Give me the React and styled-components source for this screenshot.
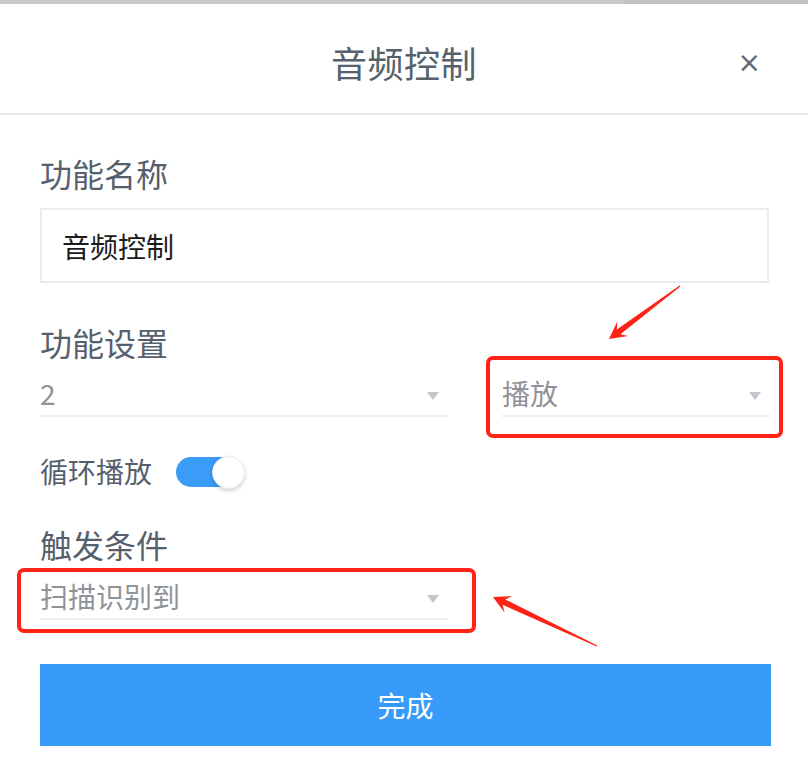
import React, { useState } from "react";
import styled, { createGlobalStyle } from "styled-components";

const GlobalStyle = createGlobalStyle`
  body {
    margin: 0;
    background: #fff;
    font-family: "Noto Sans CJK SC", "Noto Sans", sans-serif;
  }
`;

// 标注用的箭头，按尾部和尖端坐标算出多边形
const arrowPoints = (tail, tip, headLen = 17, headW = 9, shaftW = 3) => {
  const dx = tip[0] - tail[0];
  const dy = tip[1] - tail[1];
  const len = Math.hypot(dx, dy);
  const ux = dx / len;
  const uy = dy / len;
  const nx = -uy;
  const ny = ux;
  const p = (base, along, side) => [
    base[0] + ux * along + nx * side,
    base[1] + uy * along + ny * side
  ];
  const pts = [
    p(tail, 0, 0.6),
    p(tip, -(headLen - 5), shaftW),
    p(tip, -headLen, headW),
    tip,
    p(tip, -headLen, -headW),
    p(tip, -(headLen - 5), -shaftW),
    p(tail, 0, -0.6)
  ];
  return pts.map(q => q.join(",")).join(" ");
};

class Select extends React.Component {
  render() {
    return (
      <SelectBox width={this.props.width}>
        <SelectText>{this.props.value}</SelectText>
        <Caret />
      </SelectBox>
    );
  }
}

const App = () => {
  const [loop, setLoop] = useState(true);
  return (
    <Page>
      <GlobalStyle />
      <TopBar>
        <TopBarRight />
      </TopBar>
      <Header>
        <Title>音频控制</Title>
        <Close>×</Close>
      </Header>
      <Body>
        <Label top={36}>功能名称</Label>
        <Input>音频控制</Input>
        <Label top={37}>功能设置</Label>
        <SelectRow gap={11}>
          <Select width={408} value="2" />
          <Select width={268} value="播放" />
        </SelectRow>
        <SwitchRow>
          <SwitchLabel>循环播放</SwitchLabel>
          <Track on={loop} onClick={() => setLoop(!loop)}>
            <Knob on={loop} />
          </Track>
        </SwitchRow>
        <Label top={30}>触发条件</Label>
        <SelectRow gap={12}>
          <Select width={408} value="扫描识别到" />
        </SelectRow>
        <Done>完成</Done>
      </Body>
      <Marks width="808" height="779" viewBox="0 0 808 779">
        <rect x="488" y="358" width="293" height="78" rx="5" fill="none" stroke="#ff2317" strokeWidth="4" />
        <rect x="19" y="570" width="455" height="61" rx="5" fill="none" stroke="#ff2317" strokeWidth="4" />
        <polygon points={arrowPoints([680, 286], [609, 339])} fill="#ff2317" />
        <polygon points={arrowPoints([597, 646], [493, 597])} fill="#ff2317" />
      </Marks>
    </Page>
  );
};

export default App;

const Page = styled.div`
  position: relative;
  width: 808px;
  height: 779px;
  overflow: hidden;
  background: #fff;
`;

const TopBar = styled.div`
  display: flex;
  justify-content: flex-end;
  height: 4px;
  background: #cacaca;
`;

const TopBarRight = styled.div`
  width: 185px;
  background: #c1c3c3;
`;

const Header = styled.div`
  position: relative;
  display: flex;
  align-items: center;
  justify-content: center;
  height: 111px;
  padding-top: 6px;
  box-sizing: border-box;
  border-bottom: 2px solid #e6e6e6;
`;

const Title = styled.div`
  font-size: 36px;
  color: #56616b;
  letter-spacing: 0.5px;
`;

const Close = styled.div`
  position: absolute;
  right: 47px;
  top: 44px;
  font-family: "DejaVu Sans", sans-serif;
  font-size: 28px;
  line-height: 30px;
  color: #5f6a76;
`;

const Body = styled.div`
  display: flex;
  flex-direction: column;
  padding: 0 37px 0 40px;
`;

const Label = styled.div`
  margin-top: ${p => p.top}px;
  height: 44px;
  line-height: 44px;
  font-size: 32px;
  color: #56606c;
  margin-bottom: 3px;
`;

const Input = styled.div`
  margin-top: 10px;
  height: 75px;
  box-sizing: border-box;
  border: 2px solid #ebebf0;
  padding-left: 20px;
  display: flex;
  align-items: center;
  font-size: 28px;
  color: #1a1a1a;
  width: 729px;
`;

const SelectRow = styled.div`
  display: flex;
  gap: 54px;
  margin-top: ${p => p.gap || 8}px;
`;

const SelectBox = styled.div`
  display: flex;
  align-items: flex-start;
  justify-content: space-between;
  width: ${p => p.width}px;
  height: 39px;
  box-sizing: border-box;
  border-bottom: 2px solid #ececf1;
  padding-right: 9px;
`;

const SelectText = styled.span`
  font-size: 28px;
  line-height: 30px;
  color: #8f9297;
`;

const Caret = styled.span`
  width: 0;
  height: 0;
  border-left: 6px solid transparent;
  border-right: 6px solid transparent;
  border-top: 8px solid #c2c5cb;
  margin-top: 14px;
`;

const SwitchRow = styled.div`
  display: flex;
  align-items: center;
  gap: 24px;
  margin-top: 35px;
  height: 40px;
`;

const SwitchLabel = styled.span`
  font-size: 28px;
  color: #56606c;
  margin-top: -3px;
`;

const Track = styled.div`
  position: relative;
  width: 68px;
  height: 30px;
  border-radius: 15px;
  background: ${p => (p.on ? "#3a9bf8" : "#dcdfe6")};
  cursor: pointer;
`;

const Knob = styled.div`
  position: absolute;
  top: -1px;
  left: ${p => (p.on ? "36px" : "-2px")};
  width: 33px;
  height: 33px;
  border-radius: 50%;
  background: #fff;
  box-shadow: 0 2px 4px rgba(0, 0, 0, 0.18);
  box-sizing: border-box;
  border: 1px solid #eceef2;
`;

const Done = styled.div`
  margin-top: 44px;
  height: 82px;
  width: 731px;
  background: #389bfa;
  color: #fff;
  font-size: 28px;
  display: flex;
  align-items: center;
  justify-content: center;
  cursor: pointer;
  user-select: none;
`;

const Marks = styled.svg`
  position: absolute;
  left: 0;
  top: 0;
  pointer-events: none;
`;
